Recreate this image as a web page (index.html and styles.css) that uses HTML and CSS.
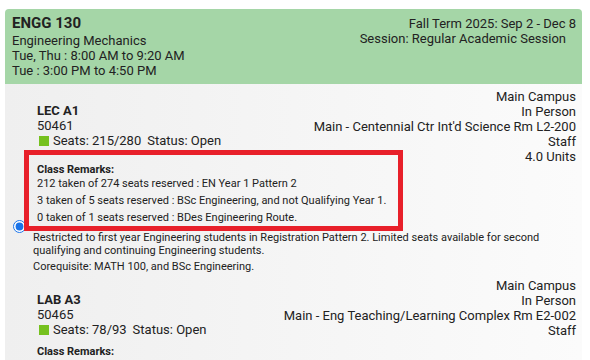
FILE: index.html
```html
<!DOCTYPE html>
<html>
<head>
    <title>ENGG 130 - Class Sections</title>
    <link rel="stylesheet" href="styles.css">
</head>
<body>
    <div class="course">
        <div class="course-head">
            <div class="course-info">
                <div class="course-code">ENGG 130</div>
                <div>Engineering Mechanics</div>
                <div>Tue, Thu : 8:00 AM to 9:20 AM</div>
                <div>Tue : 3:00 PM to 4:50 PM</div>
            </div>
            <div class="term-info">
                <div>Fall Term 2025: Sep 2 - Dec 8</div>
                <div class="session">Session: Regular Academic Session</div>
            </div>
        </div>

        <div class="course-body">
            <div class="section">
                <div class="pick">
                    <input type="radio" name="section" checked>
                </div>
                <div class="section-main">
                    <div class="location">
                        <div>Main Campus</div>
                        <div>In Person</div>
                        <div>Main - Centennial Ctr Int'd Science Rm L2-200</div>
                        <div>Staff</div>
                        <div>4.0 Units</div>
                    </div>
                    <div class="section-id">
                        <div class="section-name">LEC A1</div>
                        <div>50461</div>
                        <div class="seats"><span class="seat-dot"></span>Seats: 215/280<span class="status">Status: Open</span></div>
                    </div>
                    <div class="remarks highlight">
                        <div class="remarks-title">Class Remarks:</div>
                        <div class="reserve">212 taken of 274 seats reserved : EN Year 1 Pattern 2</div>
                        <div class="reserve">3 taken of 5 seats reserved : BSc Engineering, and not Qualifying Year 1.</div>
                        <div class="reserve">0 taken of 1 seats reserved : BDes Engineering Route.</div>
                    </div>
                    <div class="notes">
                        <p>Restricted to first year Engineering students in Registration Pattern 2. Limited seats available for second qualifying and continuing Engineering students.</p>
                        <p>Corequisite: MATH 100, and BSc Engineering.</p>
                    </div>
                </div>
            </div>

            <div class="section">
                <div class="pick"></div>
                <div class="section-main">
                    <div class="location">
                        <div>Main Campus</div>
                        <div>In Person</div>
                        <div>Main - Eng Teaching/Learning Complex Rm E2-002</div>
                        <div>Staff</div>
                    </div>
                    <div class="section-id">
                        <div class="section-name">LAB A3</div>
                        <div>50465</div>
                        <div class="seats"><span class="seat-dot"></span>Seats: 78/93<span class="status">Status: Open</span></div>
                    </div>
                    <div class="remarks">
                        <div class="remarks-title">Class Remarks:</div>
                    </div>
                </div>
            </div>
        </div>
    </div>
</body>
</html>
```

FILE: styles.css
```css
body {
    margin: 0;
    background: white;
    font-family: Roboto, "Liberation Sans", sans-serif;
    color: #222;
}
.course {
    margin: 9px 8px 0 5px;
}
.course-head {
    display: flex;
    justify-content: space-between;
    background: #a5d6a7;
    padding: 4px 6px 6px 7px;
    border-radius: 4px 4px 0 0;
    font-size: 13px;
    line-height: 15px;
}
.course-code { font-size: 15px; font-weight: bold; line-height: 20px; }
.term-info { text-align: right; padding-top: 3px; }
.session { padding-right: 10px; }

.course-body {
    background: linear-gradient(to right, #efefef, #fbfbfb);
}
.section {
    display: flex;
    padding: 5px 6px 0 0;
}
.pick {
    width: 24px;
    flex: none;
}
.pick input {
    margin: 131px 0 0 8px;
    accent-color: #1a73e8;
}
.section-main {
    flex: 1;
    font-size: 13px;
    line-height: 15px;
}
.location {
    float: right;
    text-align: right;
}
.section-id {
    padding: 14px 0 0 8px;
}
.section-name { font-weight: bold; }
.seats { display: flex; align-items: center; }
.seat-dot {
    width: 10px;
    height: 10px;
    background: #76c11f;
    margin: 0 4px 0 2px;
}
.status { margin-left: 6px; }

.remarks {
    padding: 8px 8px 1px;
    font-size: 11px;
    line-height: 14px;
}
.remarks-title { font-weight: bold; }
.reserve + .reserve { margin-top: 3px; }
.highlight {
    width: 369px;
    margin-top: 7px;
    box-sizing: border-box;
    outline: 5px solid #e8202a;
}
.notes {
    max-width: 520px;
    padding: 5px 0 0 4px;
    font-size: 11px;
    line-height: 13px;
}
.notes p { margin: 0 0 3px 0; }
.notes p:last-child { margin: 0; }
```
